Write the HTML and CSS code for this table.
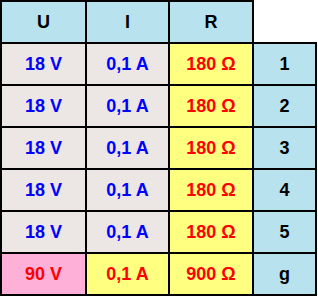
FILE: index.html
```html
<!DOCTYPE html>
<html>
<head>
<meta charset="utf-8">
<link rel="stylesheet" href="styles.css">
</head>
<body>
<div class="grid">
  <div class="cell head first top">U</div>
  <div class="cell head top">I</div>
  <div class="cell head top">R</div>
  <div class="cell empty"></div>

  <div class="cell gray first blue-t">18 V</div>
  <div class="cell gray blue-t">0,1 A</div>
  <div class="cell yellow red-t">180 Ω</div>
  <div class="cell head">1</div>

  <div class="cell gray first blue-t">18 V</div>
  <div class="cell gray blue-t">0,1 A</div>
  <div class="cell yellow red-t">180 Ω</div>
  <div class="cell head">2</div>

  <div class="cell gray first blue-t">18 V</div>
  <div class="cell gray blue-t">0,1 A</div>
  <div class="cell yellow red-t">180 Ω</div>
  <div class="cell head">3</div>

  <div class="cell gray first blue-t">18 V</div>
  <div class="cell gray blue-t">0,1 A</div>
  <div class="cell yellow red-t">180 Ω</div>
  <div class="cell head">4</div>

  <div class="cell gray first blue-t">18 V</div>
  <div class="cell gray blue-t">0,1 A</div>
  <div class="cell yellow red-t">180 Ω</div>
  <div class="cell head">5</div>

  <div class="cell pink first red-t">90 V</div>
  <div class="cell yellow red-t">0,1 A</div>
  <div class="cell yellow red-t">900 Ω</div>
  <div class="cell head">g</div>
</div>
</body>
</html>
```
FILE: styles.css
```css
html, body {
  margin: 0;
  padding: 0;
  background: #ffffff;
}
.grid {
  display: grid;
  grid-template-columns: 87px 83px 84px 63px;
  grid-template-rows: 44px repeat(6, 42px);
  font-family: "Liberation Sans", Arial, sans-serif;
  font-weight: bold;
  font-size: 18px;
}
.cell {
  box-sizing: border-box;
  display: flex;
  align-items: center;
  justify-content: center;
  border-right: 2px solid #000;
  border-bottom: 2px solid #000;
  color: #000;
}
.first { border-left: 2px solid #000; }
.top { border-top: 2px solid #000; }
.empty {
  border-right: none;
  background: #fff;
}
.head { background: #b7e2ee; }
.gray { background: #ece7e4; }
.yellow { background: #ffff80; }
.pink { background: #ffb0d8; }
.blue-t { color: #0000ff; }
.red-t { color: #ff0000; }
```
